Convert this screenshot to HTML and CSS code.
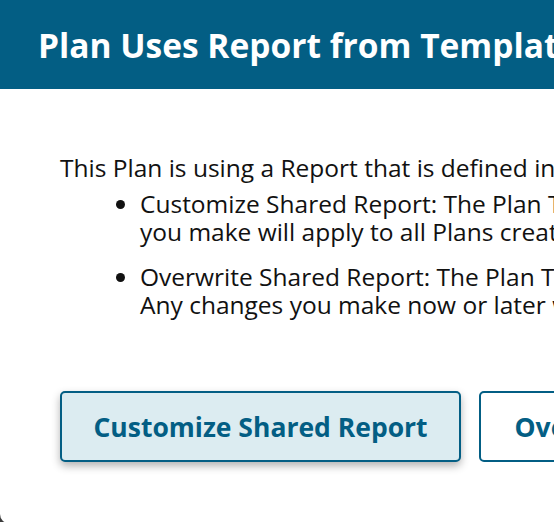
FILE: index.html
```html
<!DOCTYPE html>
<html lang="en">

<head>
    <meta charset="UTF-8">
    <meta name="viewport" content="width=device-width, initial-scale=1.0">
    <title>Plan Uses Report from Template</title>
    <link rel="stylesheet" href="styles.css">
</head>

<body>
    <!-- modal: plan uses a shared report -->
    <section class="modal">
        <header class="modal-header">
            <h1>Plan Uses Report from Template</h1>
        </header>
        <div class="modal-body">
            <p>This Plan is using a Report that is defined in its Plan Template.</p>
            <ul>
                <li>Customize Shared Report: The Plan Template's Report will be edited. Any changes<br>
                    you make will apply to all Plans created from this Plan Template.</li>
                <li>Overwrite Shared Report: The Plan Template's Report is copied into this Plan.<br>
                    Any changes you make now or later will only apply to this Plan.</li>
            </ul>
            <div class="actions">
                <button class="btn focused">Customize Shared Report</button>
                <button class="btn">Overwrite Shared Report</button>
            </div>
        </div>
    </section>
</body>

</html>
```

FILE: styles.css
```css
* {
    box-sizing: border-box;
}

body,
h1,
p,
ul,
button {
    margin: 0;
    padding: 0;
}

body {
    background-color: #3b3b3b;
    font-family: "Open Sans", sans-serif;
    color: #111;
    overflow: hidden;
}

/* modal */
.modal {
    width: 1200px;
    height: 524px;
    background-color: #fff;
    border-radius: 0 0 10px 10px;
    overflow: hidden;
}

.modal-header {
    height: 89px;
    background-color: #035e84;
    display: flex;
    align-items: center;
    padding: 0 38px;
}

.modal-header h1 {
    color: #fff;
    font-size: 33.5px;
    font-weight: 700;
    white-space: nowrap;
}

.modal-body {
    padding: 65px 60px 0;
    font-size: 24.5px;
    line-height: 28px;
    white-space: nowrap;
}

.modal-body p {
    margin-bottom: 8px;
}

.modal-body ul {
    padding-left: 80px;
}

.modal-body li {
    margin-bottom: 17px;
}

.actions {
    display: flex;
    gap: 18px;
    margin-top: 72px;
}

.btn {
    width: 401px;
    height: 71px;
    border: 2px solid #035e84;
    border-radius: 5px;
    background-color: #fff;
    color: #035e84;
    font-family: inherit;
    font-size: 26.5px;
    font-weight: 700;
    cursor: pointer;
}

.btn.focused {
    background-color: #dcecf1;
    box-shadow: 0 4px 8px rgba(0, 0, 0, .3);
}
```
